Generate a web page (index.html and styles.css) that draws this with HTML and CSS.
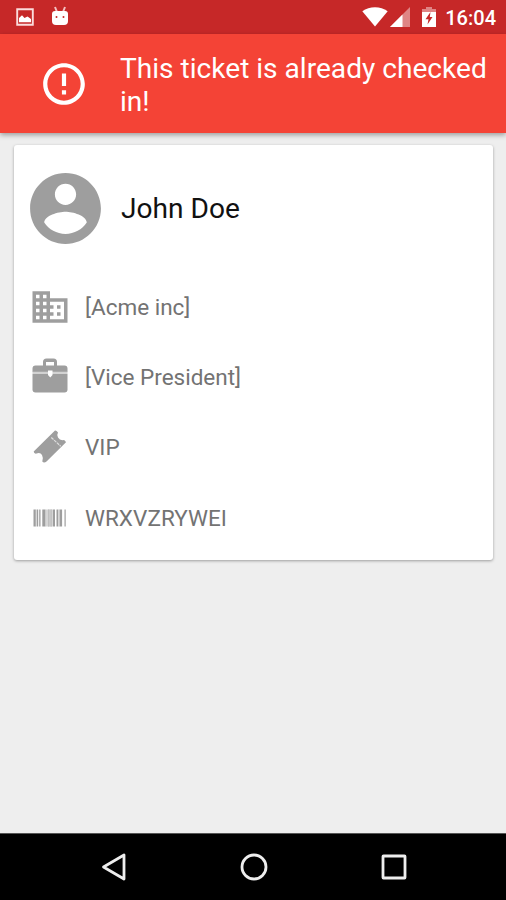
FILE: index.html
```html
<!DOCTYPE html>
<html lang="en">
<head>
  <meta charset="UTF-8">
  <title>Ticket check-in</title>
  <link rel="stylesheet" href="styles.css">
</head>
<body>

<div class="status-bar">
  <svg class="status-picture" width="18" height="18" viewBox="0 0 18 18">
    <path d="M1.200 1.200h15.600v15.600H1.200z" fill="none" stroke="#fbdcdc" stroke-width="1.900"/>
    <path d="M3 14.200V10l3-2.800 2.500 2.800 3-1.500 3.500 2.500v3.200z" fill="#fff"/>
  </svg>
  <svg class="status-android" width="18" height="20" viewBox="0 0 18 20">
    <path d="M4 1l2 5M14 1l-2 5" stroke="#f3c0c0" stroke-width="2"/>
    <path fill="#fff" d="M1 8q0-3 3-3h10q3 0 3 3v7q0 4-4 4H5q-4 0-4-4z"/>
    <circle cx="5.500" cy="11" r="1" fill="#c62828"/>
    <circle cx="12.500" cy="11" r="1" fill="#c62828"/>
  </svg>
  <svg class="status-wifi" width="26" height="20" viewBox="0 0 26 20">
    <path fill="#fff" d="M13 19.500L.3 4.200Q6 .2 13 .2t12.700 4z"/>
  </svg>
  <svg class="status-signal" width="20" height="20" viewBox="0 0 20 20">
    <path fill="#df8585" d="M0 20L20 0v20z"/>
    <path fill="#fff" d="M0 20L12.500 7.500V20z"/>
  </svg>
  <svg class="status-battery" width="14" height="20" viewBox="0 0 14 20">
    <path fill="#df8585" d="M4 0h6v2h4v4H0V2h4z"/>
    <path fill="#fff" d="M0 5h14v15H0z"/>
    <path fill="#c62828" d="M8.500 5L3.500 12.200h3L5.500 17.500 10.500 10H7.800z"/>
  </svg>
  <span class="clock">16:04</span>
</div>

<div class="banner">
  <svg class="banner-icon" width="50" height="50" viewBox="0 0 24 24">
    <path fill="#fff" d="M11 15h2v2h-2zm0-8h2v6h-2zm.99-5C6.470 2 2 6.480 2 12s4.470 10 9.990 10C17.520 22 22 17.520 22 12S17.520 2 11.990 2zM12 20c-4.420 0-8-3.580-8-8s3.580-8 8-8 8 3.580 8 8-3.580 8-8 8z"/>
  </svg>
  <div class="banner-text">This ticket is already checked in!</div>
</div>

<div class="content">
  <div class="card">
    <div class="person">
      <svg class="avatar" width="85" height="85" viewBox="0 0 24 24">
        <path d="M12 2C6.480 2 2 6.480 2 12s4.480 10 10 10 10-4.480 10-10S17.520 2 12 2zm0 3c1.660 0 3 1.340 3 3s-1.340 3-3 3-3-1.340-3-3 1.340-3 3-3zm0 14.200c-2.500 0-4.710-1.280-6-3.220.03-1.990 4-3.080 6-3.080 1.990 0 5.970 1.090 6 3.080-1.290 1.940-3.500 3.220-6 3.220z"/>
      </svg>
      <div class="name">John Doe</div>
    </div>

    <div class="row">
      <svg class="row-icon" viewBox="0 0 24 24">
        <path d="M12 7V3H2v18h20V7H12zM6 19H4v-2h2v2zm0-4H4v-2h2v2zm0-4H4V9h2v2zm0-4H4V5h2v2zm4 12H8v-2h2v2zm0-4H8v-2h2v2zm0-4H8V9h2v2zm0-4H8V5h2v2zm10 12h-8v-2h2v-2h-2v-2h2v-2h-2V9h8v10zm-2-8h-2v2h2v-2zm0 4h-2v2h2v-2z"/>
      </svg>
      <span>[Acme inc]</span>
    </div>

    <div class="row">
      <svg class="row-icon" viewBox="0 0 42 42">
        <path d="M14 9.500V6q0-3.500 3.500-3.500h7Q28 2.500 28 6v3.500h7.500q3 0 3 3V16h-35v-3.500q0-3 3-3zm3 0h8V6h-8z" fill-rule="evenodd"/>
        <path d="M3.500 18h35v15.500q0 3-3 3h-29q-3 0-3-3z"/>
        <path fill="#d2d2d2" d="M3.500 15.800h35v2.300h-35z"/>
        <path fill="#fff" d="M19 14.500h4.500v4.500l-2.250 2.500L19 19z"/>
      </svg>
      <span>[Vice President]</span>
    </div>

    <div class="row">
      <svg class="row-icon" viewBox="0 0 42 42">
        <path d="M26 4.500Q27.500 4.300 29 6.500 27.500 9 29 11.500t4.500 2.700q2.500-.5 3.500 2L17.500 35.500Q15 37.500 13.300 35.500q1.200-4-.3-6.500t-4.500-1.700Q5 28.500 4.700 25.500z"/>
        <path d="M22.300 11.500l9.400 8.700" stroke="#dedede" stroke-width="1.200" stroke-dasharray="3 .8"/>
      </svg>
      <span>VIP</span>
    </div>

    <div class="row">
      <svg class="row-icon" viewBox="0 0 42 42">
        <path d="M4.500 12.500h2.300v17H4.500zM8 12.500h1.200v17H8zM10.200 12.500h1.300v17h-1.300zM13.300 12.500h3.200v17h-3.200zM19.200 12.500h1.200v17h-1.200zM21.500 12.500h1.200v17h-1.200zM24 12.500h2v17h-2zM27.500 12.500h1.700v17h-1.700zM30.500 12.500h2.600v17h-2.600zM35.500 12.500h1.200v17h-1.200z"/>
        <path fill="#c4c4c4" d="M16.500 12.500h7.500v17h-7.500zM6.800 12.500h1.200v17H6.800zM29.200 12.500h1.300v17h-1.300z" opacity="0.700"/>
      </svg>
      <span>WRXVZRYWEI</span>
    </div>
  </div>
</div>

<div class="nav-bar">
  <svg width="28" height="30" viewBox="0 0 28 30">
    <path d="M3.500 15L24 3v24z"/>
  </svg>
  <svg width="28" height="30" viewBox="0 0 28 30">
    <circle cx="14" cy="15" r="12"/>
  </svg>
  <svg width="28" height="30" viewBox="0 0 28 30">
    <rect x="3" y="4" width="22" height="22" rx="0.500"/>
  </svg>
</div>

</body>
</html>
```
FILE: styles.css
```css
* {
  box-sizing: border-box;
}
body {
  margin: 0;
  height: 900px;
  display: flex;
  flex-direction: column;
  background: #eee;
  font-family: Roboto, "Liberation Sans", sans-serif;
  overflow: hidden;
}
svg {
  display: block;
  flex: none;
}
.status-bar {
  height: 34px;
  flex: none;
  display: flex;
  align-items: center;
  padding: 0 10px 0 16px;
  background: #c62828;
}
.status-android {
  margin: -2px 0 0 17px;
}
.status-wifi {
  margin-left: auto;
}
.status-signal {
  margin-left: 2px;
}
.status-battery {
  margin-left: 12px;
}
.clock {
  margin: 2px 0 0 9px;
  color: #fff;
  font-size: 20px;
  line-height: 24px;
  font-weight: 500;
}
.banner {
  height: 99px;
  flex: none;
  display: flex;
  align-items: center;
  padding: 0 10px 0 39px;
  background: #f44336;
  box-shadow: 0 2px 5px rgba(0, 0, 0, 0.35);
}
.banner-text {
  margin: 2px 0 0 31px;
  color: #fff;
  font-size: 28.1px;
  line-height: 33px;
}
.content {
  flex: 1;
  padding: 11.5px 13px 0 14px;
}
.card {
  height: 415px;
  padding-top: 21px;
  background: #fff;
  border-radius: 3px;
  box-shadow: 0 1px 3px rgba(0, 0, 0, 0.35);
}
.person {
  display: flex;
  align-items: center;
  padding-left: 9px;
  margin-bottom: 21px;
}
.avatar,
.row-icon {
  fill: #9e9e9e;
}
.name {
  margin: 1px 0 0 13px;
  font-size: 28.1px;
  color: #111;
}
.row {
  height: 70.3px;
  display: flex;
  align-items: center;
  padding-left: 15px;
  color: #737373;
  font-size: 22.5px;
}
.row-icon {
  width: 42px;
  height: 42px;
  margin-right: 14px;
}
.nav-bar {
  height: 67px;
  flex: none;
  display: flex;
  justify-content: center;
  align-items: center;
  gap: 112px;
  padding-left: 1px;
  background: #000;
  border-top: 1px solid #555;
}
.nav-bar svg {
  fill: none;
  stroke: #eee;
  stroke-width: 2.800;
  stroke-linejoin: round;
}
```
